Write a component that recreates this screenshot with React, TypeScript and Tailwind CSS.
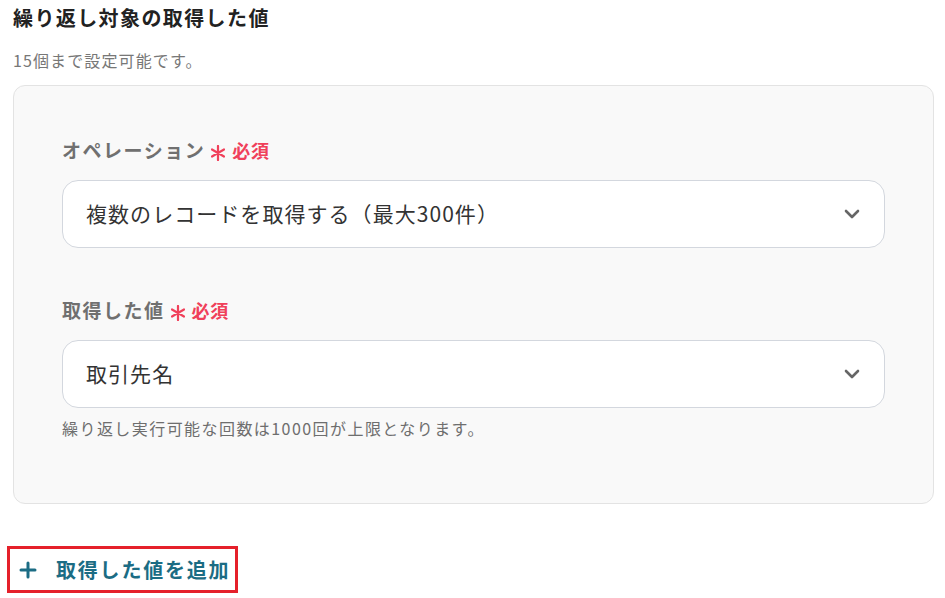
import { Plus } from "lucide-react";

function Chevron() {
  return (
    <svg width="16" height="10" viewBox="0 0 16 10" fill="none">
      <path d="M2 2l6 6 6-6" stroke="#666666" strokeWidth="2.6" strokeLinecap="round" strokeLinejoin="round" />
    </svg>
  );
}

function Asterisk() {
  return (
    <svg width="14" height="16" viewBox="0 0 14 16" fill="none" className="mt-1.5">
      <path d="M7 1v14M1 4.5l12 7M13 4.5l-12 7" stroke="#f0405a" strokeWidth="2.2" strokeLinecap="round" />
    </svg>
  );
}

function Field({ label, value, help }: { label: string; value: string; help?: string }) {
  return (
    <div>
      <div className="flex items-center mb-[16px] h-7">
        <span className="text-[19px] font-bold text-[#707070] tracking-[0.08em]">{label}</span>
        <span className="ml-1.5 flex items-center gap-[7px] text-[#f0405a] font-bold">
          <Asterisk />
          <span className="text-[18px] tracking-[0.04em]">必須</span>
        </span>
      </div>
      <div className="h-[68px] bg-white border border-[#d3d7de] rounded-[16px] flex items-center justify-between pl-[23px] pr-6">
        <span className="text-[21px] text-[#333333] tracking-[0.05em]">{value}</span>
        <Chevron />
      </div>
      {help && (
        <p className="mt-2 text-[16px] text-[#6e6e6e] tracking-[0.09em]">{help}</p>
      )}
    </div>
  );
}

export default function App() {
  return (
    <div
      className="w-[945px] h-[598px] bg-white overflow-hidden"
      style={{ fontFamily: '"Noto Sans CJK JP", "Noto Sans", sans-serif' }}
    >
      <div className="pt-1 pl-[13px] pr-3">
        <h2 className="text-[20px] font-bold text-[#222222] tracking-[0.07em] leading-[28px]">
          繰り返し対象の取得した値
        </h2>
        <p className="mt-4 text-[16px] text-[#777777] tracking-[0.07em]">15個まで設定可能です。</p>

        <div className="mt-[13px] w-[921px] h-[419px] bg-[#f9f9f9] border border-[#e3e3e3] rounded-[12px] px-12 pt-[50px]">
          <Field label="オペレーション" value="複数のレコードを取得する（最大300件）" />
          <div className="mt-[48px]">
            <Field
              label="取得した値"
              value="取引先名"
              help="繰り返し実行可能な回数は1000回が上限となります。"
            />
          </div>
        </div>
      </div>

      <div className="mt-[42px] ml-[7px] inline-flex items-center gap-[16px] border-[3px] border-[#e5202a] h-[47px] pl-[6px] pr-[5px]">
        <Plus size={24} strokeWidth={3} color="#1b6c84" />
        <span className="text-[20px] font-bold text-[#1b6c84] tracking-[0.09em]">取得した値を追加</span>
      </div>
    </div>
  );
}
